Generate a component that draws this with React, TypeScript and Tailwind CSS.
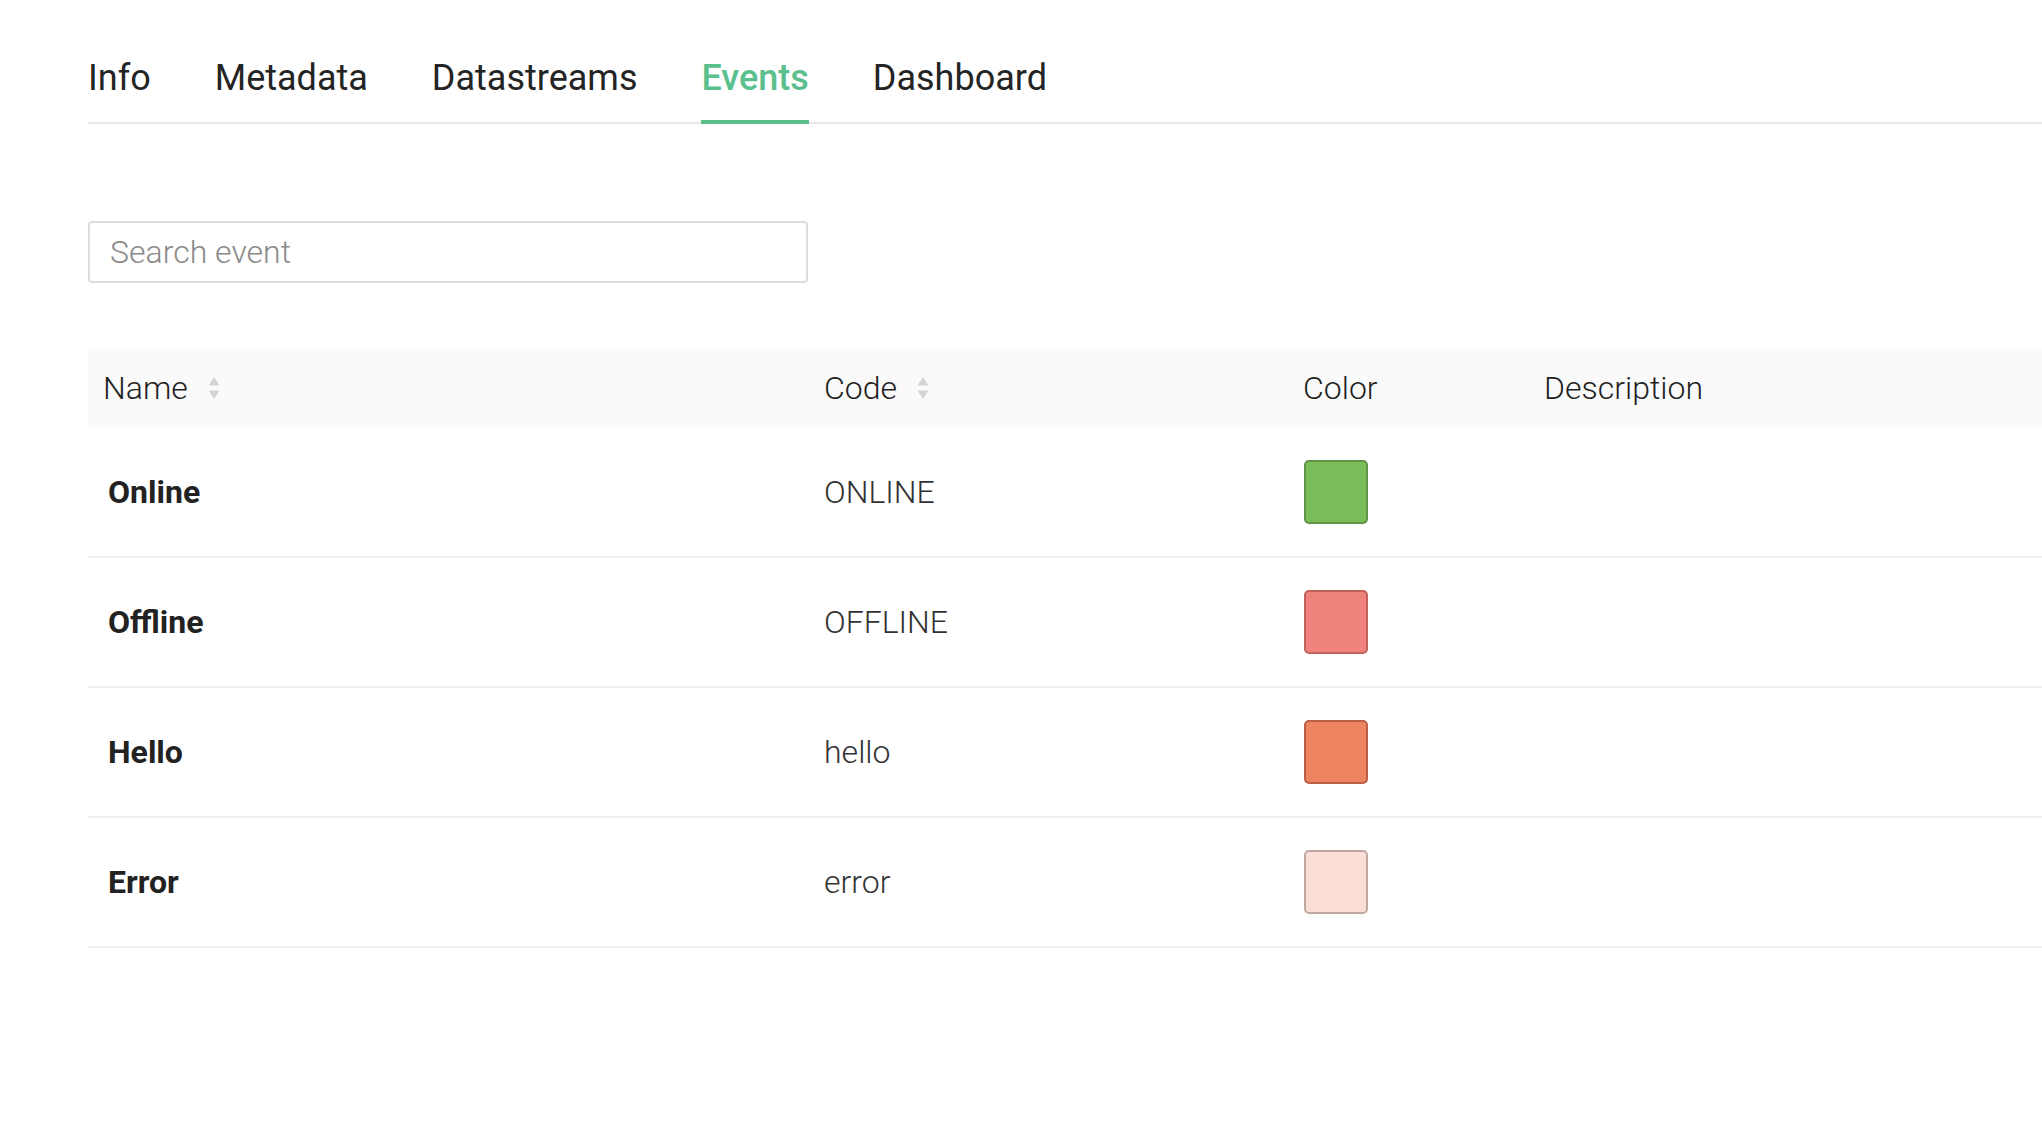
import React from "react";

const TABS = ["Info", "Metadata", "Datastreams", "Events", "Dashboard"];

const EVENTS = [
  { name: "Online", code: "ONLINE", fill: "#7bbd5a", border: "#5f9345" },
  { name: "Offline", code: "OFFLINE", fill: "#ef827b", border: "#c0615c" },
  { name: "Hello", code: "hello", fill: "#ee8462", border: "#b96147" },
  { name: "Error", code: "error", fill: "#fbdfd7", border: "#c0a8a2" },
];

function SortIcon() {
  return (
    <svg width="12" height="24" viewBox="0 0 12 24" className="ml-[20px]">
      <path d="M6 1 L11.5 9.5 L0.5 9.5 Z" fill="#d4d4d4" />
      <path d="M0.5 14.5 L11.5 14.5 L6 23 Z" fill="#d4d4d4" />
    </svg>
  );
}

export default function App() {
  return (
    <div className="min-h-screen bg-white pl-[88px] font-['Roboto',sans-serif] text-[#242424]">
      {/* tabs */}
      <div className="flex gap-[64px] border-b-2 border-[#e8e8e8] pt-[57px]">
        {TABS.map((t) => (
          <div
            key={t}
            className={
              t === "Events"
                ? "-mb-[2px] border-b-4 border-[#5cbf8e] pb-[21px] text-[36px] font-medium leading-[42px] text-[#5cbf8e]"
                : "-mb-[2px] border-b-4 border-transparent pb-[21px] text-[36px] leading-[42px]"
            }
          >
            {t}
          </div>
        ))}
      </div>

      {/* search */}
      <div className="mt-[97px] flex h-[62px] w-[720px] items-center rounded-[4px] border-2 border-[#dcdcdc] pl-[20px]">
        <input
          placeholder="Search event"
          className="w-full bg-transparent text-[32px] font-light leading-[40px] text-[#333] outline-none placeholder:text-[#8a8a8a]"
        />
      </div>

      {/* table */}
      <div className="mt-[65px]">
        <div className="grid h-[80px] grid-cols-[717px_482px_240px_1fr] items-center bg-[#fafafa] text-[32px] font-light leading-[40px] text-[#1f1f1f]">
          <div className="flex items-center pl-[15px]">
            Name
            <SortIcon />
          </div>
          <div className="flex items-center pl-[19px]">
            Code
            <SortIcon />
          </div>
          <div className="pl-[16px]">Color</div>
          <div className="pl-[17px]">Description</div>
        </div>

        {EVENTS.map((e) => (
          <div
            key={e.name}
            className="grid h-[130px] grid-cols-[717px_482px_240px_1fr] items-center border-b-2 border-[#eeeeee] text-[32px] leading-[40px]"
          >
            <div className="pl-[20px] font-bold text-[#222]">{e.name}</div>
            <div className="pl-[19px] font-light text-[#333]">{e.code}</div>
            <div className="pl-[17px]">
              <div
                className="h-[64px] w-[64px] rounded-[5px] border-2"
                style={{ backgroundColor: e.fill, borderColor: e.border }}
              />
            </div>
            <div />
          </div>
        ))}
      </div>
    </div>
  );
}
